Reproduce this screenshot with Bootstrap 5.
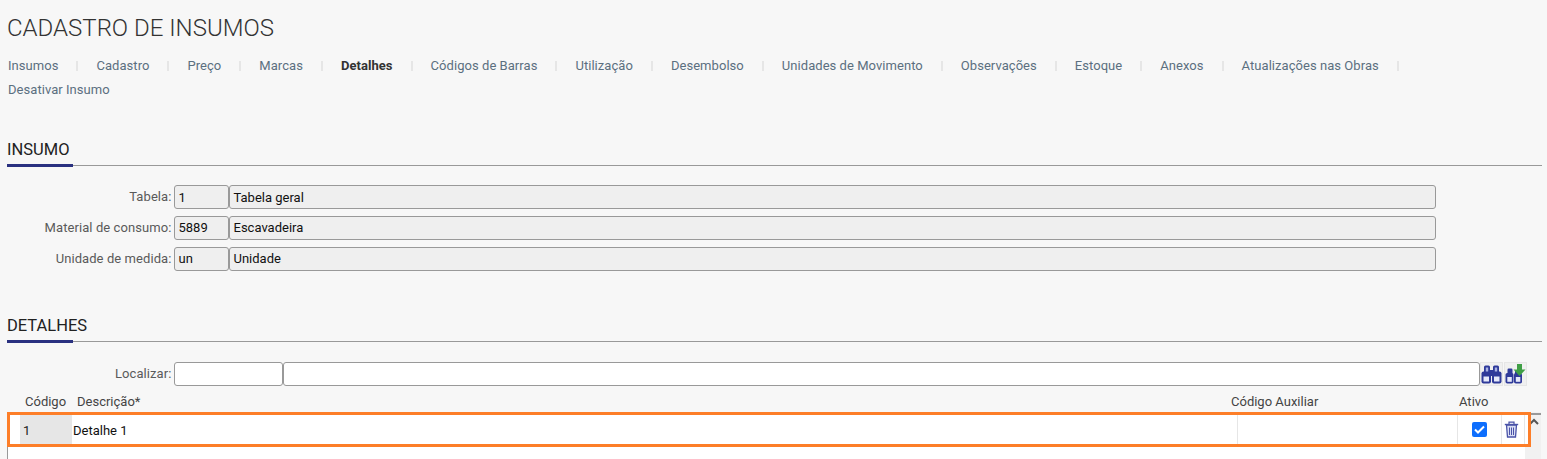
<!DOCTYPE html>
<html lang="pt-BR">
<head>
<meta charset="utf-8">
<title>Cadastro de Insumos</title>
<link href="https://cdn.jsdelivr.net/npm/bootstrap@5.3.0/dist/css/bootstrap.min.css" rel="stylesheet">
<style>
html,body{height:459px;overflow:hidden}
body{background:#f7f7f7;font-family:Roboto,sans-serif;font-size:13px;color:#333}
.page-wrap{padding:0 5px 0 7px;position:relative;height:459px}
.page-heading{font-size:24px;font-weight:300;color:#333;margin:0;line-height:28px;padding-top:14px;height:54px}
.tab-bar{list-style:none;display:flex;flex-wrap:wrap;margin:0;padding:0;line-height:24px;width:1440px}
.tab-bar li{position:relative;padding-right:37px;height:24px}
.tab-bar li::after{content:"";position:absolute;right:17px;top:7px;width:2px;height:10px;background:#e6e6e6}
.tab-bar li:last-child::after{display:none}
.tab-bar a{color:#5b6f80;text-decoration:none;letter-spacing:.05px;padding-left:1px}
.tab-bar a.on{color:#333;font-weight:700}
.sec-title{font-size:16.5px;font-weight:400;color:#222;margin:0;line-height:20px;height:26px;border-bottom:1px solid #999;position:relative}
.sec-title::after{content:"";position:absolute;left:0;bottom:-2px;width:66px;height:3px;background:#2a3180}
.form-line{display:flex;align-items:center;height:24px;margin-bottom:7px}
.form-line label{width:167px;text-align:right;padding-right:2.500px;color:#5a5a5a;letter-spacing:.08px}
.fld{height:24px;border:1px solid #999;border-radius:3px;padding:0 3.500px;line-height:23px;background:#efefef;color:#111;flex:none}
.fld-tight{line-height:21px}
.fld-code{width:55px}
.fld-name{width:1207px}
.fld-white{background:#fff}
.icon-btn{width:23px;height:24px;background:#f0f0f0;border:1px solid #e6e6e6;padding:0;display:flex;align-items:center;justify-content:center;margin-left:1px;flex:none}
.col-heads{display:flex;height:26px;line-height:26px;color:#444;position:relative}
.grid-frame{position:absolute;left:7px;top:412px;width:1534px;height:47px;display:flex}
.grid-body{width:1518px;background:#fff;border-left:1px solid #999}
.hi-row{position:absolute;left:0;top:0;width:1524px;height:35px;border:3px solid #fd7e28;display:flex;align-items:stretch;background:#fff}
.cell-code{margin-left:10px;width:52px;background:#e6e6e6;line-height:31px;padding-left:3px;color:#222}
.cell-desc{width:1166px;line-height:31px;padding-left:1px;border-right:1px solid #e6e6e6;color:#111}
.cell-aux{width:220px;border-right:1px solid #e6e6e6}
.cell-check{width:44px;border-right:1px solid #e6e6e6;display:flex;align-items:center;justify-content:center}
.cell-del{width:23px;display:flex;align-items:center;justify-content:center;padding-right:3px;border-right:1px solid #e6e6e6}
.check-box{width:15px;height:15px;background:#0d6efd;border-radius:2px;display:flex;align-items:center;justify-content:center}
.scroll-rail{width:16px;background:#f1f1f1;position:relative}
.scroll-top{position:absolute;left:5px;right:0;top:1px;height:2px;background:#999}
</style>
</head>
<body>
<div class="page-wrap">
  <h1 class="page-heading">CADASTRO DE INSUMOS</h1>
  <ul class="tab-bar">
    <li><a href="#">Insumos</a></li>
    <li><a href="#">Cadastro</a></li>
    <li><a href="#">Preço</a></li>
    <li><a href="#">Marcas</a></li>
    <li><a href="#" class="on">Detalhes</a></li>
    <li><a href="#">Códigos de Barras</a></li>
    <li><a href="#">Utilização</a></li>
    <li><a href="#">Desembolso</a></li>
    <li><a href="#">Unidades de Movimento</a></li>
    <li><a href="#">Observações</a></li>
    <li><a href="#">Estoque</a></li>
    <li><a href="#">Anexos</a></li>
    <li><a href="#">Atualizações nas Obras</a></li>
    <li style="width:100%"><a href="#">Desativar Insumo</a></li>
  </ul>

  <h2 class="sec-title" style="margin-top:38px;margin-bottom:19px">INSUMO</h2>
  <div class="form-line"><label>Tabela:</label><div class="fld fld-code">1</div><div class="fld fld-name">Tabela geral</div></div>
  <div class="form-line"><label>Material de consumo:</label><div class="fld fld-code fld-tight">5889</div><div class="fld fld-name fld-tight">Escavadeira</div></div>
  <div class="form-line"><label>Unidade de medida:</label><div class="fld fld-code fld-tight">un</div><div class="fld fld-name fld-tight">Unidade</div></div>

  <h2 class="sec-title" style="margin-top:45px;margin-bottom:20px">DETALHES</h2>
  <div class="form-line mb-0">
    <label>Localizar:</label>
    <div class="fld fld-white" style="width:109px"></div>
    <div class="fld fld-white" style="width:1197px"></div>
    <button class="icon-btn" type="button" aria-label="Localizar" style="margin-left:0">
      <svg width="21" height="19" viewBox="0 0 21 19"><g fill="#2f3a9a"><rect x="3" y="0.500" width="6" height="9" rx="1.500"/><rect x="12" y="0.500" width="6" height="9" rx="1.500"/><rect x="0.500" y="6.500" width="9.500" height="12" rx="2"/><rect x="11" y="6.500" width="9.500" height="12" rx="2"/><rect x="9" y="5" width="3" height="6"/></g><rect x="4.800" y="2.500" width="2.400" height="4" fill="#aab2e4"/><rect x="13.800" y="2.500" width="2.400" height="4" fill="#aab2e4"/><rect x="2.500" y="11.500" width="5.500" height="5" fill="#e6e9fa"/><rect x="13" y="11.500" width="5.500" height="5" fill="#e6e9fa"/></svg>
    </button>
    <button class="icon-btn" type="button" aria-label="Localizar próximo">
      <svg width="21" height="20" viewBox="0 0 21 20"><g fill="#2f3a9a"><rect x="2.500" y="4.500" width="5" height="7" rx="1.200"/><rect x="10" y="6" width="5" height="6" rx="1.200"/><rect x="0.500" y="9" width="8" height="10.500" rx="1.800"/><rect x="9" y="9" width="8" height="10.500" rx="1.800"/></g><rect x="2.300" y="13" width="4.500" height="4.800" fill="#e6e9fa"/><rect x="10.800" y="13" width="4.500" height="4.800" fill="#e6e9fa"/><path d="M12 0h5v5.500h3.500l-6 6.500-6-6.500H12z" fill="#3f9f45"/></svg>
    </button>
  </div>
  <div class="col-heads" style="margin-top:3px">
    <span style="margin-left:18px;width:52px">Código</span>
    <span style="width:1154px">Descrição*</span>
    <span style="width:228px">Código Auxiliar</span>
    <span>Ativo</span>
  </div>
  <div class="grid-frame">
    <div class="grid-body"></div>
    <div class="scroll-rail"><span class="scroll-top"></span><svg width="12" height="8" viewBox="0 0 12 8" style="position:absolute;left:3px;top:6px"><path d="M2 6l4-4 4 4" fill="none" stroke="#555" stroke-width="2"/></svg></div>
    <div class="hi-row">
      <div class="cell-code">1</div>
      <div class="cell-desc">Detalhe 1</div>
      <div class="cell-aux"></div>
      <div class="cell-check"><span class="check-box"><svg width="11" height="9" viewBox="0 0 11 9"><path d="M1 4.500l3 3 6-6" fill="none" stroke="#fff" stroke-width="2"/></svg></span></div>
      <div class="cell-del"><svg width="15" height="17" viewBox="0 0 15 17"><path d="M5 3V1.200h5V3" fill="none" stroke="#4a53a8" stroke-width="1.200"/><path d="M2.500 4l1 12h8l1-12z" fill="#d9ddf3" stroke="#4a53a8" stroke-width="1.300"/><path d="M.8 3.500h13.400" stroke="#4a53a8" stroke-width="1.400"/><path d="M5.500 6.500v7.500M7.500 6.500v7.500M9.500 6.500v7.500" stroke="#4a53a8" stroke-width="1"/></svg></div>
    </div>
  </div>
</div>
<script src="https://cdn.jsdelivr.net/npm/bootstrap@5.3.0/dist/js/bootstrap.bundle.min.js"></script>
</body>
</html>
